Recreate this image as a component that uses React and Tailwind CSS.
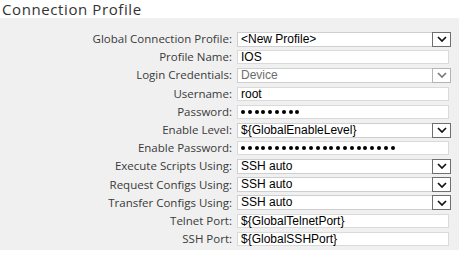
import React from "react";

const rows = [
  { label: "Global Connection Profile:", type: "select", value: "<New Profile>" },
  { label: "Profile Name:", type: "text", value: "IOS" },
  { label: "Login Credentials:", type: "select", value: "Device", disabled: true },
  { label: "Username:", type: "text", value: "root" },
  { label: "Password:", type: "password", count: 9 },
  { label: "Enable Level:", type: "select", value: "${GlobalEnableLevel}" },
  { label: "Enable Password:", type: "password", count: 23 },
  { label: "Execute Scripts Using:", type: "select", value: "SSH auto" },
  { label: "Request Configs Using:", type: "select", value: "SSH auto" },
  { label: "Transfer Configs Using:", type: "select", value: "SSH auto" },
  { label: "Telnet Port:", type: "text", value: "${GlobalTelnetPort}" },
  { label: "SSH Port:", type: "text", value: "${GlobalSSHPort}" },
];

function Chevron({ disabled }) {
  return (
    <svg width="10" height="6" viewBox="0 0 10 6">
      <path
        d="M1 1 L5 5 L9 1"
        fill="none"
        stroke={disabled ? "#7a7a7a" : "#111"}
        strokeWidth="1.7"
      />
    </svg>
  );
}

function Field({ row }) {
  if (row.type === "select") {
    return (
      <div className="flex h-[15px] w-[214px] items-stretch border border-[#cfcfcf] bg-white">
        <span
          className={`flex-1 pl-[3px] text-[12px] leading-[13px] ${
            row.disabled ? "text-[#6d6d6d]" : "text-black"
          }`}
        >
          {row.value}
        </span>
        <span
          className={`-my-px -mr-px flex w-[19px] items-center justify-center border bg-white ${
            row.disabled ? "border-[#b4b4b4]" : "border-[#6f6f6f]"
          }`}
        >
          <Chevron disabled={row.disabled} />
        </span>
      </div>
    );
  }
  if (row.type === "password") {
    return (
      <div className="flex h-[14px] w-[212px] items-center gap-[2.8px] border border-[#dadada] bg-white pl-[3px]">
        {Array.from({ length: row.count }).map((_, i) => (
          <span key={i} className="h-[4px] w-[4px] rounded-full bg-black" />
        ))}
      </div>
    );
  }
  return (
    <div className="h-[14px] w-[212px] border border-[#dadada] bg-white pl-[3px] text-[12px] leading-[12px] text-black">
      {row.value}
    </div>
  );
}

export default function App() {
  return (
    <div className="h-[253px] w-[459px] bg-white font-['Open_Sans',sans-serif]">
      <div className="h-[18px] pl-[2px] text-[15px] leading-[18px] tracking-[0.6px] text-[#333]">
        Connection Profile
      </div>
      <div className="flex flex-col bg-[#f0f0f0] pb-[2px] pt-[12px]">
        {rows.map((row) => (
          <div key={row.label} className="flex h-[18.2px] items-center">
            <label className="w-[233px] pr-[1px] text-right text-[11.5px] leading-[14px] text-[#3a3a3a]">
              {row.label}
            </label>
            <div className="ml-[4px] font-['Liberation_Sans',Arial,sans-serif]">
              <Field row={row} />
            </div>
          </div>
        ))}
      </div>
    </div>
  );
}
